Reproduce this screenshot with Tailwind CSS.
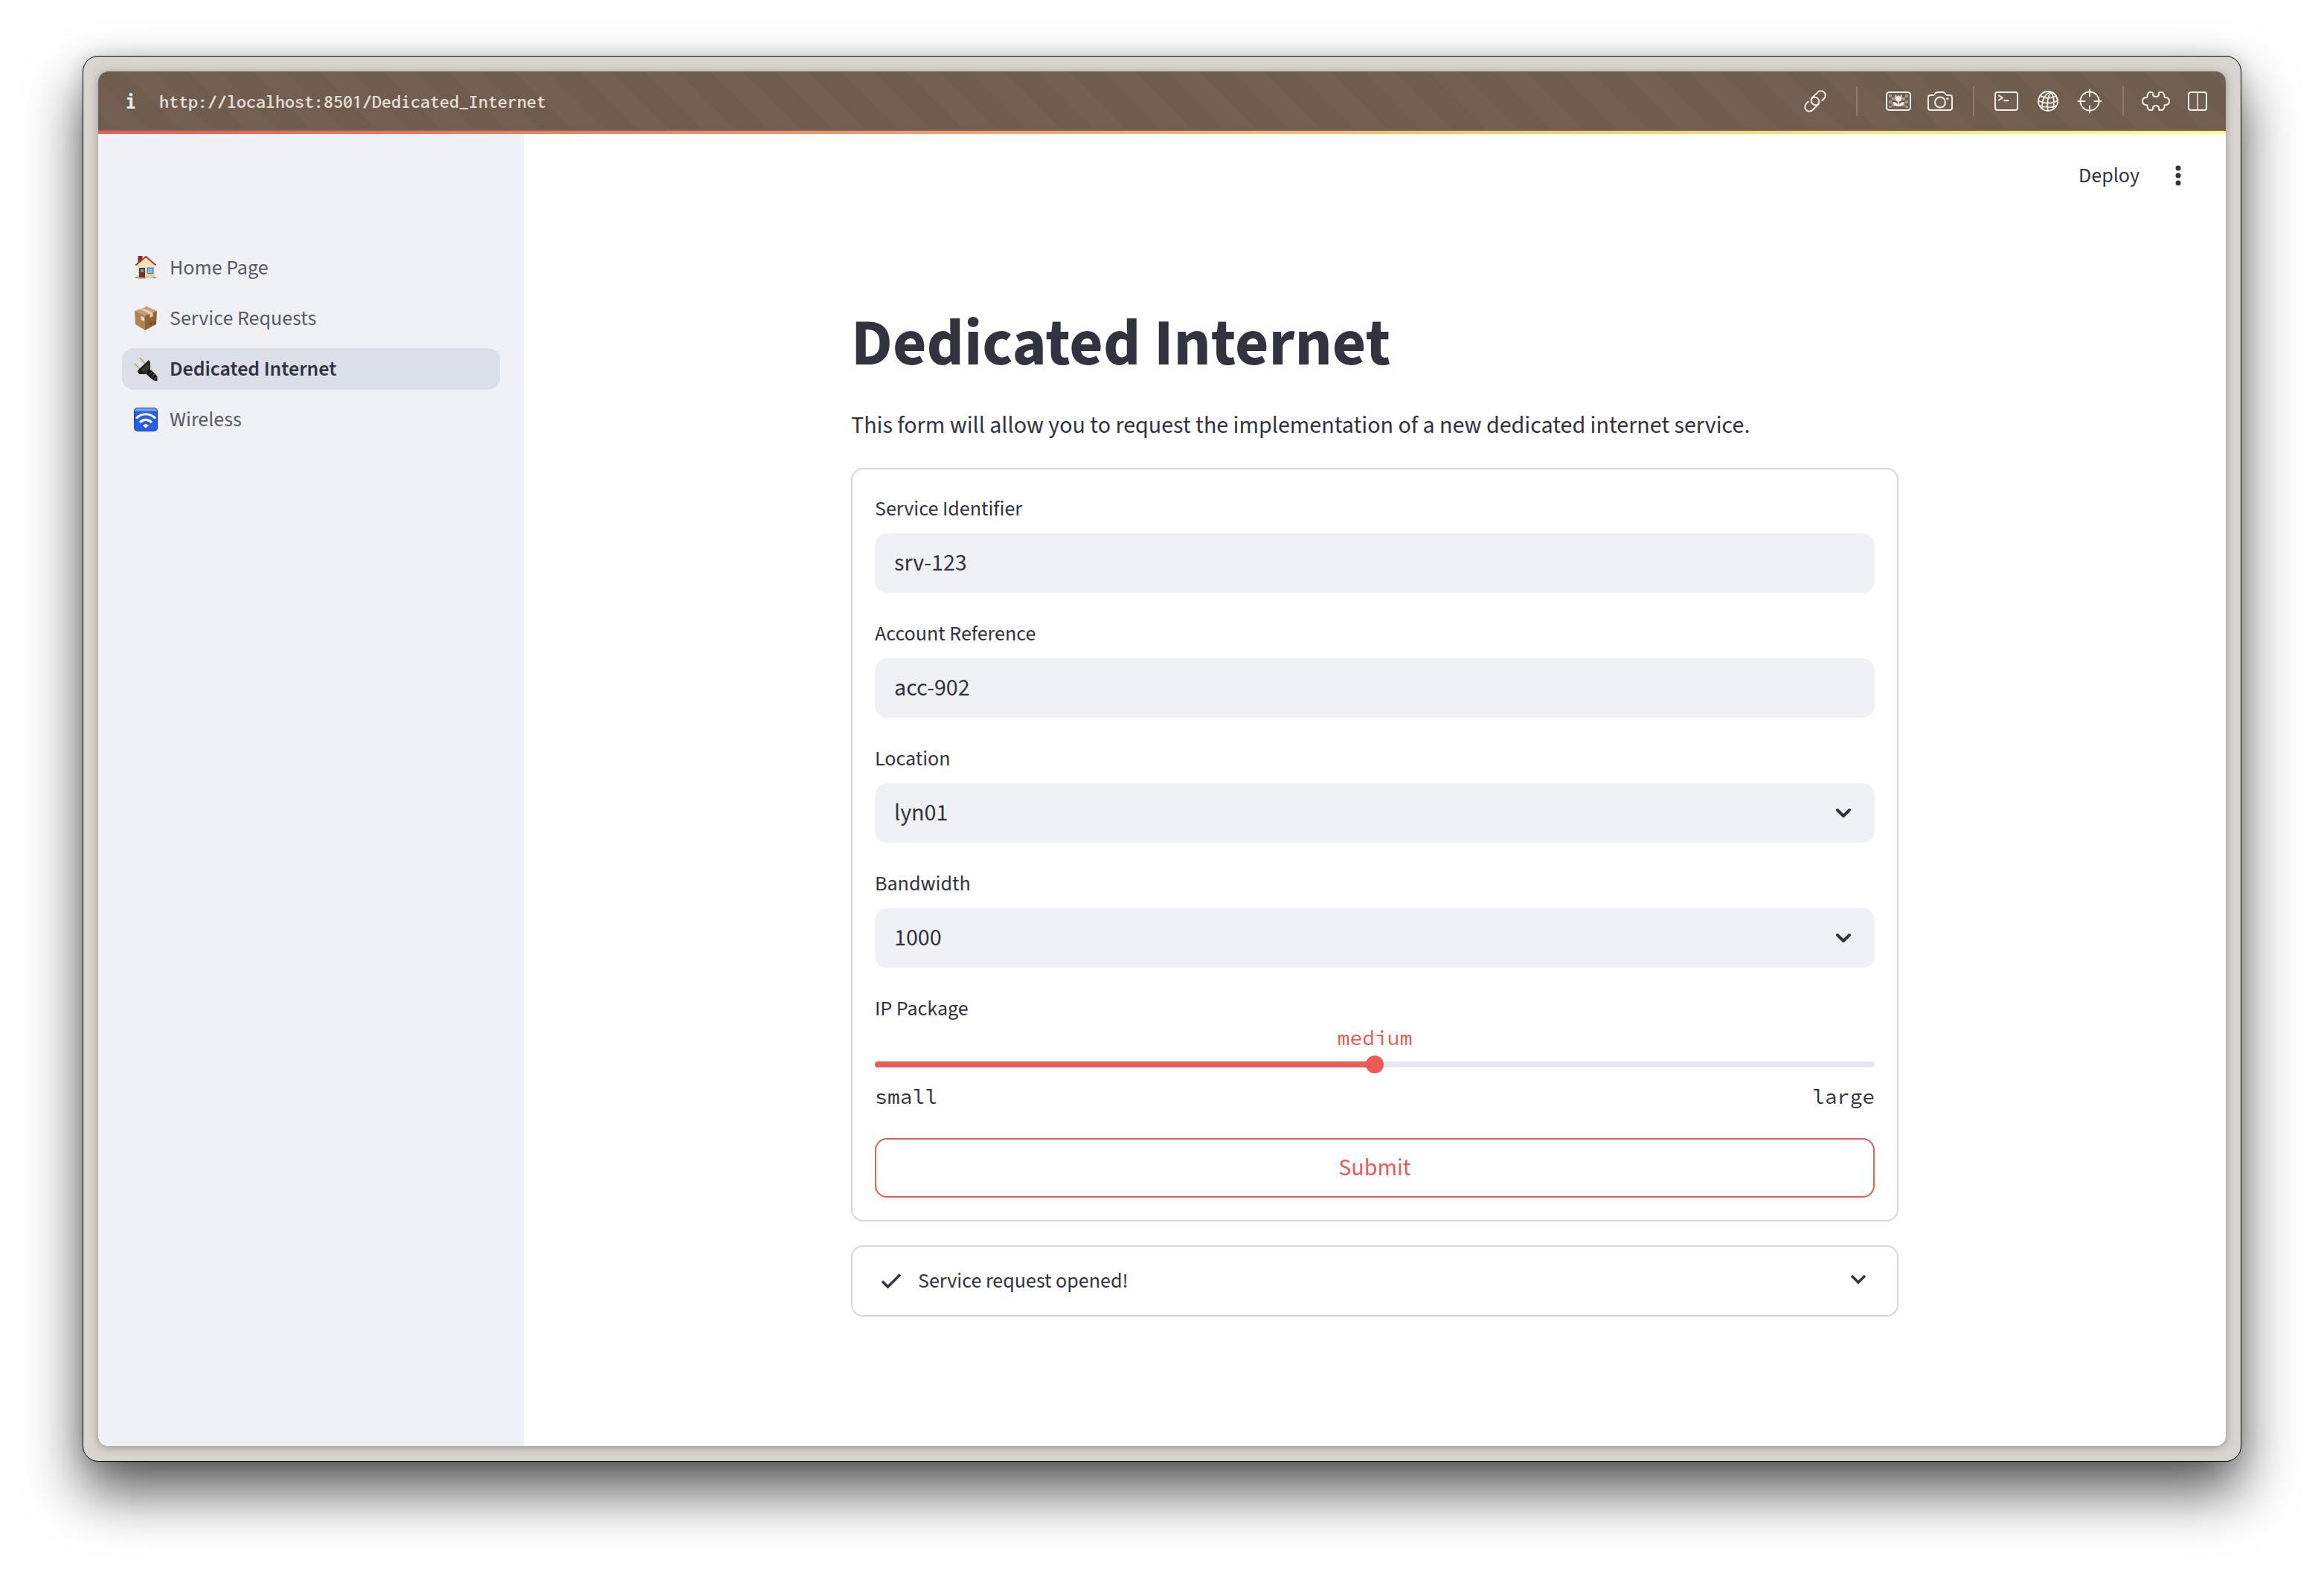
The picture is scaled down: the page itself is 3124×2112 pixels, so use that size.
<!DOCTYPE html>
<html lang="en">
<head>
<meta charset="utf-8">
<title>Dedicated Internet</title>
<script src="https://cdn.jsdelivr.net/npm/@tailwindcss/browser@4"></script>
</head>
<body class="flex min-h-screen bg-white px-[111px] pt-[75px] pb-[147px] font-['Source_Sans_3','Noto_Sans',sans-serif] text-[28px] text-[#31333f]">
<div class="flex flex-1 rounded-[21px] border border-black bg-[#d8d5d0] p-5 shadow-[0_40px_76px_rgba(0,0,0,0.66),0_0_24px_rgba(0,0,0,0.15)]">
  <div class="flex flex-1 flex-col overflow-hidden rounded-[14px] bg-white shadow-[0_2px_12px_rgba(0,0,0,0.3)]">

    <!-- Browser toolbar -->
    <div class="flex h-20 items-center bg-[repeating-linear-gradient(45deg,#6e5d4d_0px,#6e5d4d_18px,#725f52_18px,#725f52_49px,#6e5d4d_49px,#6e5d4d_62px)] pr-[10px] pl-7 text-[#f1ece6] shadow-[inset_0_-2px_0_#7a6a5c]">
      <button type="button" aria-label="Site information" class="w-8 text-center font-['Inconsolata','Liberation_Mono',monospace] text-[32px] font-bold">i</button>
      <input type="text" aria-label="Address" value="http://localhost:8501/Dedicated_Internet" class="ml-[22px] flex-1 bg-transparent font-['Inconsolata','Liberation_Mono',monospace] text-[26px] font-semibold text-[#e3ddd6] outline-none">
      <button type="button" aria-label="Copy link" class="flex w-14 justify-center">
        <svg class="size-10" viewBox="-20 -20 40 40" fill="none" stroke="currentColor" stroke-width="2" stroke-linecap="round"><g transform="rotate(-45)"><path d="M7 6H11A6 6 0 0 0 11 -6H1A6 6 0 0 0 -4.200 3"/><path d="M1 6A6 6 0 0 1 -4.200 3"/><path d="M-7 -6H-11A6 6 0 0 0 -11 6H-1A6 6 0 0 0 4.200 -3"/><path d="M-1 -6A6 6 0 0 1 4.200 -3"/></g></svg>
      </button>
      <span class="mx-[27px] h-10 w-[2px] bg-[#8c7d70]"></span>
      <button type="button" aria-label="Image" class="flex w-14 justify-center">
        <svg class="size-10" viewBox="-20 -20 40 40"><path fill="currentColor" opacity=".4" d="M-13-9h4v4h-4zM-13-1h4v4h-4zM-9-5h4v4h-4zM-9 3h4v4h-4zM-13 6h4v3h-4zM9-9h4v4H9zM9-1h4v4H9zM5-5h4v4H5zM5 3h4v4H5zM9 6h4v3H9zM-5-9h3v2h-3zM2-9h3v2H2z"/><rect x="-16" y="-12" width="32" height="24" rx="3.5" fill="none" stroke="currentColor" stroke-width="2"/><path fill="currentColor" d="M-4.500-8l2.500 2L0-8l2 2L4.500-8v4c0 2.500-1.500 4-3.700 4.500V4.500C2 2.500 4.500 .5 8 1 7.500 5 4.500 7 0 7S-7.500 5-8 1C-4.500 .5-2 2.500-.8 4.500V.5C-3 0-4.500-1.500-4.500-4z"/></svg>
      </button>
      <button type="button" aria-label="Screenshot" class="flex w-14 justify-center">
        <svg class="size-10" viewBox="-20 -20 40 40" fill="none" stroke="currentColor" stroke-width="2"><path stroke-linejoin="round" d="M-13-8h3.500c1 0 1.500-.3 2-1l1-1.500c.7-1 1.300-1.500 2.500-1.500h8c1.200 0 1.800.5 2.500 1.500l1 1.500c.5.7 1 1 2 1H13a3 3 0 0 1 3 3V9a3 3 0 0 1-3 3h-26a3 3 0 0 1-3-3V-5a3 3 0 0 1 3-3z"/><circle cx="0" cy="1.500" r="7"/><circle cx="10" cy="-3.500" r="1.600" fill="currentColor" stroke="none"/></svg>
      </button>
      <span class="mr-[15px] ml-4 h-10 w-[2px] bg-[#8c7d70]"></span>
      <button type="button" aria-label="Console" class="flex w-14 justify-center">
        <svg class="size-10" viewBox="-20 -20 40 40" fill="none" stroke="currentColor" stroke-width="2"><rect x="-15" y="-12" width="30" height="24" rx="3"/><path stroke-linejoin="round" stroke-linecap="round" d="M-10-7.500l5 3-5 3"/><path d="M-3.500-.8h6.500"/></svg>
      </button>
      <button type="button" aria-label="Network" class="flex w-14 justify-center">
        <svg class="size-10" viewBox="-20 -20 40 40" fill="none" stroke="currentColor" stroke-width="1.800"><circle r="13"/><path d="M4-12.500C-4-10-9-2-7.500 10.500M4-12.500C0-7-2 3 0 13M4-12.500C8-7 9 3 6.500 11M4-12.500C9-11 12-6 13-1M-10.500-7.500C-4-3 5-3.500 10.500-7.500M-13-1C-5 4 6 3.500 13-1M-11.500 6C-5 8.500 5 9 11 6.500"/></svg>
      </button>
      <button type="button" aria-label="Inspect" class="flex w-14 justify-center">
        <svg class="size-10" viewBox="-20 -20 40 40" fill="none" stroke="currentColor" stroke-width="2" stroke-linecap="round"><circle r="12.500"/><path d="M0-15.500v9M0 15.500v-9M-15.500 0h9M15.500 0h-9"/></svg>
      </button>
      <span class="mr-[15px] ml-4 h-10 w-[2px] bg-[#8c7d70]"></span>
      <button type="button" aria-label="Extensions" class="flex w-14 justify-center">
        <svg class="size-10" viewBox="-20 -20 40 40" fill="none" stroke="currentColor" stroke-width="2" stroke-linejoin="round"><path d="M-9-12h3.500c1 0 1.500.5 1.500 1.500v1c0 2 1.500 3.500 4 3.500s4-1.500 4-3.500v-1c0-1 .5-1.500 1.500-1.500H9c1.500 2 2.500 2.500 2.500 4.500v1.500c0 .7.300 1 1 1C16-5 18-3 18 0s-2 5-5.500 5c-.7 0-1 .3-1 1v1.500c0 2-1 2.500-2.500 4.500H5.500c-1 0-1.500-.5-1.500-1.500v-1C4 7.500 2.500 6 0 6s-4 1.500-4 3.500v1c0 1-.5 1.500-1.500 1.500H-9c-1.500-2-2.500-2.500-2.500-4.500V6c0-.7-.3-1-1-1C-16 5-18 3-18 0s2-5 5.500-5c.7 0 1-.3 1-1v-1.500c0-2 1-2.500 2.500-4.500z"/></svg>
      </button>
      <button type="button" aria-label="Split view" class="flex w-14 justify-center">
        <svg class="size-10" viewBox="-20 -20 40 40" fill="none" stroke="currentColor" stroke-width="2"><rect x="-12" y="-12" width="24" height="24" rx="3"/><path stroke-width="1.500" d="M0-12v24"/></svg>
      </button>
    </div>
    <div class="h-1 bg-linear-to-r/srgb from-[#ec5a53] to-[#fffd85]"></div>

    <div class="flex flex-1">
      <!-- Sidebar -->
      <aside class="w-[572px] shrink-0 bg-[#f0f1f6] px-8 pt-[152px]">
        <nav class="flex flex-col gap-3 text-[#595b66]">
          <a href="#" class="flex h-14 items-center gap-4 rounded-2xl px-4">
            <svg class="size-8" viewBox="0 0 32 32"><path fill="#8e2a26" d="M5.500 0h6v9h-6z"/><path fill="#f3e3bd" d="M4 12L16 2l12 10v18H4z"/><path fill="#e0cc9f" d="M4 26h24v4H4z"/><path fill="none" stroke="#b5322c" stroke-width="2" stroke-linecap="round" d="M3 12L16 1 29 12"/><path fill="#6d3423" d="M7 16h8v14H7z"/><path fill="#62a0dd" d="M9 18h4v4H9z"/><path fill="#5d83ad" d="M17.500 15.500h9v9h-9z"/><path fill="#7fbdf0" d="M19 17h6v6h-6z"/><path fill="#b9a999" d="M6 29h10v1.800H6z"/><path fill="#5c8a32" d="M1 30a3 3 0 0 1 5 0zM26 30a3 3 0 0 1 5 0z"/></svg>
            Home Page</a>
          <a href="#" class="flex h-14 items-center gap-4 rounded-2xl px-4">
            <svg class="size-8" viewBox="0 0 32 32"><path fill="#c99e6c" d="M1 6L17 0l14 6-16 7z"/><path fill="#b0814f" d="M1 6l14 6.500V32L2 24z"/><path fill="#8f6233" d="M15 12.500L31 6l-1 18-15 8z"/><path fill="#e0cfb4" d="M8 3.400l4-1.500 13.500 6.500v5l-4 1.500v-5z"/><path fill="#d8e2e8" d="M9.500 13l4.500 2v5l-4.500-2z"/><path fill="#5f3f1e" d="M21 23l4-1.500-2 4zM27 20.500l2-.8v3l-2 .8z"/></svg>
            Service Requests</a>
          <a href="#" aria-current="page" class="flex h-14 items-center gap-4 rounded-2xl bg-[#dbdfe8] px-4 font-semibold text-[#31333f]">
            <svg class="size-8" viewBox="0 0 32 32"><path stroke="#c9a13c" stroke-width="1.500" d="M1 8.500l7 8M8 1l7 8"/><path fill="#1c1e1e" d="M4.500 18.500L20 4l2 3.500V17l-6.500 6H7z"/><path fill="#363938" d="M9 17.500L19.500 8l1.500 2v5l-7 6z"/><path fill="#151515" d="M20 17l4 1 7.500 8v6l-5-.5-10-8.500z"/><path stroke="#666" stroke-width="1" d="M20 24l5-5M23.500 27l5-4.500M27 30l4-3.500"/></svg>
            Dedicated Internet</a>
          <a href="#" class="flex h-14 items-center gap-4 rounded-2xl px-4">
            <svg class="size-8" viewBox="0 0 32 32"><rect width="32" height="32" rx="5" fill="#1c3fa3"/><rect x="1" y="1" width="30" height="30" rx="4" fill="#275de8"/><path fill="#7fa3f3" d="M5 1h22a4 4 0 0 1 4 3.500H1A4 4 0 0 1 5 1z"/><path fill="none" stroke="#fff" stroke-width="3.200" d="M3 14.500C10.500 6.800 21.500 6.800 29 14.500M8 20c4.700-4.800 11.300-4.800 16 0"/><path fill="#fff" d="M12 24c2.300-2.300 5.700-2.300 8 0l-4 3.500z"/></svg>
            Wireless</a>
        </nav>
      </aside>

      <div class="flex flex-1 flex-col">
        <header class="flex h-[112px] items-center justify-end gap-8 pr-11">
          <button type="button">Deploy</button>
          <button type="button" aria-label="Main menu" class="flex w-10 justify-center">
            <svg class="size-8" viewBox="0 0 32 32" fill="currentColor"><circle cx="16" cy="6" r="3.500"/><circle cx="16" cy="16" r="3.500"/><circle cx="16" cy="26" r="3.500"/></svg>
          </button>
        </header>

        <main class="mx-auto flex w-full max-w-[1408px] flex-col pt-[118px]">
          <h1 class="text-[88px] leading-[106px] font-bold">Dedicated Internet</h1>
          <p class="mt-[31px] text-[32px] leading-[50px]">This form will allow you to request the implementation of a new dedicated internet service.</p>

          <form class="mt-8 flex flex-col gap-8 rounded-2xl border-2 border-[#d5d6d8] p-[30px]" onsubmit="return false">
            <div class="flex flex-col gap-[10px]">
              <label for="service" class="leading-[46px]">Service Identifier</label>
              <input id="service" type="text" value="srv-123" class="h-20 rounded-2xl bg-[#f0f1f6] px-[26px] text-[32px] outline-none">
            </div>
            <div class="flex flex-col gap-[10px]">
              <label for="account" class="leading-[46px]">Account Reference</label>
              <input id="account" type="text" value="acc-902" class="h-20 rounded-2xl bg-[#f0f1f6] px-[26px] text-[32px] outline-none">
            </div>
            <div class="flex flex-col gap-[10px]">
              <label for="location" class="leading-[46px]">Location</label>
              <div class="relative">
                <select id="location" class="block h-20 w-full appearance-none rounded-2xl bg-[#f0f1f6] px-[26px] text-[32px] outline-none"><option>lyn01</option></select>
                <svg class="pointer-events-none absolute top-6 right-[26px] size-8" viewBox="0 0 32 32" fill="none" stroke="currentColor" stroke-width="4" stroke-linecap="round" stroke-linejoin="round"><path d="M8 12l8 8 8-8"/></svg>
              </div>
            </div>
            <div class="flex flex-col gap-[10px]">
              <label for="bandwidth" class="leading-[46px]">Bandwidth</label>
              <div class="relative">
                <select id="bandwidth" class="block h-20 w-full appearance-none rounded-2xl bg-[#f0f1f6] px-[26px] text-[32px] outline-none"><option>1000</option></select>
                <svg class="pointer-events-none absolute top-6 right-[26px] size-8" viewBox="0 0 32 32" fill="none" stroke="currentColor" stroke-width="4" stroke-linecap="round" stroke-linejoin="round"><path d="M8 12l8 8 8-8"/></svg>
              </div>
            </div>
            <div class="flex flex-col">
              <label for="package" class="leading-[46px]">IP Package</label>
              <output for="package" class="text-center font-['Source_Code_Pro','Liberation_Mono',monospace] leading-[32px] text-[#ec5a53]">medium</output>
              <div class="flex h-10 items-center">
                <input id="package" type="range" min="0" max="2" value="1" class="h-2 w-full appearance-none rounded bg-linear-to-r from-[#ec5a53] from-50% to-[#e5e8f0] to-50% [&::-webkit-slider-thumb]:size-6 [&::-webkit-slider-thumb]:appearance-none [&::-webkit-slider-thumb]:rounded-full [&::-webkit-slider-thumb]:bg-[#ec5a53]">
              </div>
              <div class="flex justify-between font-['Source_Code_Pro','Liberation_Mono',monospace] leading-[47px]"><span>small</span><span>large</span></div>
            </div>
            <button type="submit" class="h-20 rounded-2xl border-2 border-[#ec5a53] text-[32px] text-[#ec5a53]">Submit</button>
          </form>

          <details class="mt-8 rounded-2xl border-2 border-[#d5d6d8]">
            <summary class="flex h-[92px] list-none items-center gap-4 px-8">
              <svg class="size-10" viewBox="0 0 40 40" fill="none" stroke="currentColor" stroke-width="3.500"><path d="M8 20.500l7.500 7.500L32 11.500"/></svg>
              <span class="flex-1">Service request opened!</span>
              <svg class="size-10" viewBox="0 0 40 40" fill="none" stroke="currentColor" stroke-width="3.500"><path d="M11 13l9 9 9-9"/></svg>
            </summary>
          </details>
        </main>
      </div>
    </div>
  </div>
</div>
</body>
</html>
